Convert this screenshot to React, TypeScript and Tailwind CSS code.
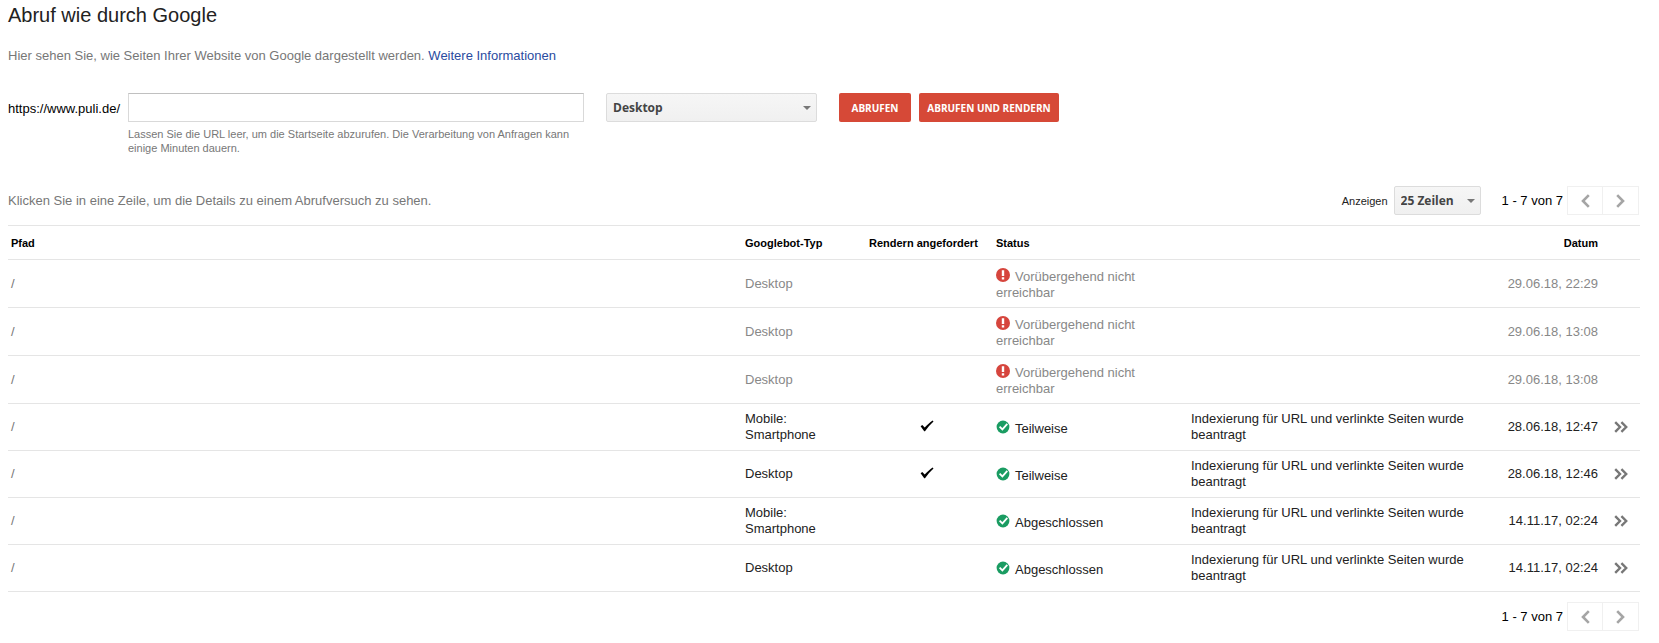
import React, { useState } from "react";

type FetchRow = {
  id: string;
  path: string;
  bot: string;
  rendered: boolean;
  status: "error" | "partial" | "complete";
  message: string | null;
  date: string;
};

const INDEXED = "Indexierung für URL und verlinkte Seiten wurde beantragt";

const rows: FetchRow[] = [
  { id: "1", path: "/", bot: "Desktop", rendered: false, status: "error", message: null, date: "29.06.18, 22:29" },
  { id: "2", path: "/", bot: "Desktop", rendered: false, status: "error", message: null, date: "29.06.18, 13:08" },
  { id: "3", path: "/", bot: "Desktop", rendered: false, status: "error", message: null, date: "29.06.18, 13:08" },
  { id: "4", path: "/", bot: "Mobile: Smartphone", rendered: true, status: "partial", message: INDEXED, date: "28.06.18, 12:47" },
  { id: "5", path: "/", bot: "Desktop", rendered: true, status: "partial", message: INDEXED, date: "28.06.18, 12:46" },
  { id: "6", path: "/", bot: "Mobile: Smartphone", rendered: false, status: "complete", message: INDEXED, date: "14.11.17, 02:24" },
  { id: "7", path: "/", bot: "Desktop", rendered: false, status: "complete", message: INDEXED, date: "14.11.17, 02:24" },
];

const statusLabels = {
  error: "Vorübergehend nicht erreichbar",
  partial: "Teilweise",
  complete: "Abgeschlossen",
};

function ErrorIcon() {
  return (
    <svg viewBox="0 0 14 14" className="inline-block w-[14px] h-[14px] mr-[5px] align-[-1px]" aria-hidden="true">
      <circle cx="7" cy="7" r="7" fill="#d6453d" />
      <path d="M5.8 2.2h2.4v5.8H5.8zM5.8 9.2h2.4v2.4H5.8z" fill="#fff" />
    </svg>
  );
}

function OkIcon() {
  return (
    <svg viewBox="0 0 14 14" className="inline-block w-[14px] h-[14px] mr-[5px] align-[-1px]" aria-hidden="true">
      <circle cx="7" cy="7" r="6.4" fill="#1a9c62" />
      <path d="M3.6 6.6l2.8 2.8 4.9-5.6" fill="none" stroke="#fff" strokeWidth="1.8" />
    </svg>
  );
}

function CheckIcon() {
  return (
    <svg viewBox="0 0 14 12" className="inline-block w-[14px] h-[12px]" role="img" aria-label="Ja">
      <path d="M0.6 6.2l1.7-1.2 2.4 2.6C7.4 4.8 9.8 2.6 12.6 0.6l0.9 1C10.4 4.4 7.6 7.6 5 11.2H4.2z" fill="#000" />
    </svg>
  );
}

function Chevron({ flip = false }: { flip?: boolean }) {
  return (
    <svg viewBox="0 0 9 14" className="w-[9px] h-[14px]" aria-hidden="true">
      <path d={flip ? "M1.2 1.2L7 7l-5.8 5.8" : "M7.8 1.2L2 7l5.8 5.8"} fill="none" stroke="#a5a5a5" strokeWidth="2.6" />
    </svg>
  );
}

function Pager() {
  return (
    <div className="mr-px flex items-center gap-1 text-[13px] text-black">
      <span>1 - 7 von 7</span>
      <div className="flex h-[29px] border border-[#f0f0f0]">
        <button type="button" aria-label="Zurück" className="flex w-[35px] items-center justify-center border-r border-[#f0f0f0]">
          <Chevron />
        </button>
        <button type="button" aria-label="Weiter" className="flex w-[35px] items-center justify-center">
          <Chevron flip />
        </button>
      </div>
    </div>
  );
}

type SelectProps = {
  id: string;
  label: string;
  options: string[];
  className: string;
};

function Select({ id, label, options, className }: SelectProps) {
  return (
    <div className={`relative ${className}`}>
      <select
        id={id}
        aria-label={label}
        className="h-[29px] w-full appearance-none rounded-[2px] border border-[#dcdcdc] bg-linear-to-b from-[#f6f6f6] to-[#f0f0f0] pl-[6px] pr-5 font-['Open_Sans',sans-serif] text-xs font-bold text-[#444]"
      >
        {options.map((o) => (
          <option key={o}>{o}</option>
        ))}
      </select>
      <svg viewBox="0 0 8 4" className="pointer-events-none absolute right-[6px] top-[13px] h-1 w-2" aria-hidden="true">
        <path d="M0 0h8L4 4z" fill="#777" />
      </svg>
    </div>
  );
}

export default function App() {
  const [path, setPath] = useState("");

  return (
    <main className="bg-white pl-2 pr-[19px] font-['Liberation_Sans',Arial,sans-serif] text-[13px] leading-4 text-[#222]">
      <h1 className="pt-[3px] text-xl leading-6">Abruf wie durch Google</h1>
      <p className="mt-[21px] text-[#777]">
        Hier sehen Sie, wie Seiten Ihrer Website von Google dargestellt werden.{" "}
        <a href="#info" className="text-[#2a4ba0]">
          Weitere Informationen
        </a>
      </p>

      <form className="mt-[29px] flex items-start" onSubmit={(e) => e.preventDefault()}>
        <label htmlFor="path" className="w-[120px] leading-[31px] text-black">
          https://www.puli.de/
        </label>
        <div className="w-[456px]">
          <input
            id="path"
            type="text"
            value={path}
            onChange={(e) => setPath(e.target.value)}
            className="block h-[29px] w-full border border-[#d9d9d9] border-t-[#c0c0c0] px-2"
          />
          <p className="mt-[5px] text-[11px] leading-[14px] text-[#777]">
            Lassen Sie die URL leer, um die Startseite abzurufen. Die Verarbeitung von Anfragen kann einige Minuten dauern.
          </p>
        </div>
        <Select id="bot" label="Googlebot-Typ" options={["Desktop", "Mobile: Smartphone"]} className="ml-[22px] w-[211px]" />
        <div className="ml-[22px] flex gap-2 font-['Open_Sans',sans-serif] text-[10px] font-bold text-white">
          <button type="submit" className="h-[29px] w-[72px] rounded-[2px] bg-[#d64937]">
            ABRUFEN
          </button>
          <button type="button" className="h-[29px] w-[140px] rounded-[2px] bg-[#d64937]">
            ABRUFEN UND RENDERN
          </button>
        </div>
      </form>

      <div className="mt-[31px] flex items-center justify-between">
        <p className="text-[#777]">Klicken Sie in eine Zeile, um die Details zu einem Abrufversuch zu sehen.</p>
        <div className="flex items-center">
          <label htmlFor="count" className="mr-[6px] text-[11px] text-[#222]">
            Anzeigen
          </label>
          <Select id="count" label="Anzeigen" options={["25 Zeilen", "50 Zeilen"]} className="mr-[21px] w-[87px]" />
          <Pager />
        </div>
      </div>

      <table className="mt-[10px] w-full table-fixed border-collapse border-y border-[#e5e5e5]">
        <thead>
          <tr className="h-[34px] border-b border-[#e5e5e5] text-left text-[11px] text-black">
            <th className="px-[3px]">Pfad</th>
            <th className="w-[124px] px-[3px]">Googlebot-Typ</th>
            <th className="w-[127px] whitespace-nowrap px-[3px]">Rendern angefordert</th>
            <th className="w-[195px] px-[3px]">Status</th>
            <th className="w-[290px] px-[3px]"></th>
            <th className="w-[123px] px-[3px] text-right">Datum</th>
            <th className="w-[39px]"></th>
          </tr>
        </thead>
        <tbody>
          {rows.map((row) => {
            const failed = row.status === "error";
            return (
              <tr
                key={row.id}
                className={failed ? "h-12 border-b border-[#e5e5e5] text-[#888]" : "h-[47px] cursor-pointer border-b border-[#e5e5e5]"}
              >
                <td className="px-[3px] text-[#777]">{row.path}</td>
                <td className="pl-[3px] pr-10">{row.bot}</td>
                <td className="pb-1 pr-[5px] text-center">{row.rendered && <CheckIcon />}</td>
                <td className="pl-[3px] pr-10 pt-0.5">
                  {failed ? <ErrorIcon /> : <OkIcon />}
                  {statusLabels[row.status]}
                </td>
                <td className="px-[3px]">{row.message}</td>
                <td className="whitespace-nowrap px-[3px] text-right">{row.date}</td>
                <td className="pl-[13px]">
                  {!failed && (
                    <button type="button" aria-label="Details" className="block">
                      <svg viewBox="0 0 14 12" className="h-3 w-[14px]" aria-hidden="true">
                        <path d="M1.2 1.2L6 6l-4.8 4.8M7.4 1.2L12.2 6l-4.8 4.8" fill="none" stroke="#777" strokeWidth="2.4" />
                      </svg>
                    </button>
                  )}
                </td>
              </tr>
            );
          })}
        </tbody>
      </table>

      <div className="mt-[10px] flex justify-end">
        <Pager />
      </div>
    </main>
  );
}
